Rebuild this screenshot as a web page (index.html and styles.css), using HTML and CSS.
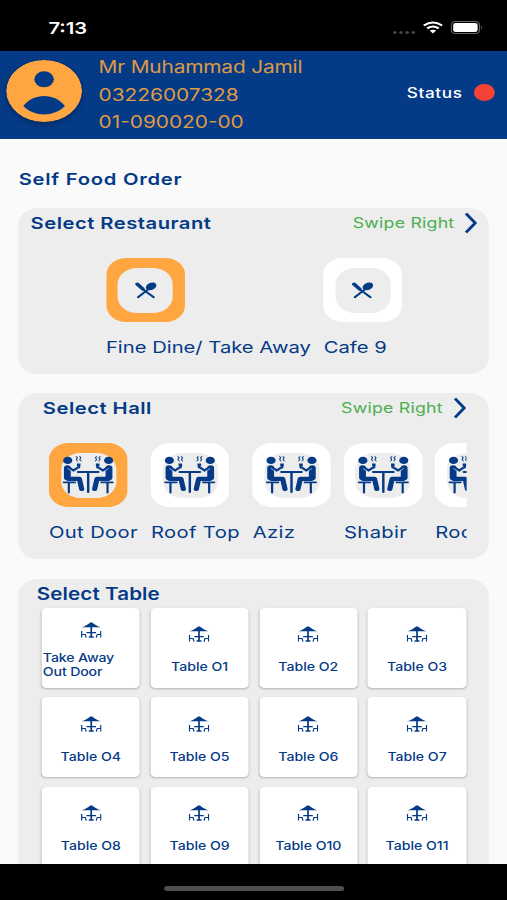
FILE: index.html
```html
<!DOCTYPE html>
<html lang="en">
<head>
  <meta charset="UTF-8" />
  <title>Self Food Order</title>
  <link rel="stylesheet" href="styles.css">
</head>
<body>

  <!-- Shared icons -->
  <svg class="icon-defs">
    <symbol id="utensils" viewBox="0 0 18 17">
      <path d="M2.7 15.2L11 7.4M15.500 15.2L7 7.600" fill="none" stroke="#043a86" stroke-width="1.9" stroke-linecap="round" />
      <path d="M2.1 2.2L6.6 7" fill="none" stroke="#043a86" stroke-width="3.2" stroke-linecap="round" />
      <ellipse cx="13.4" cy="4.4" rx="4.7" ry="3.4" transform="rotate(-35 13.4 4.4)" fill="#043a86" />
    </symbol>
    <symbol id="diners" viewBox="0 0 42 38">
      <g id="diner" fill="none" stroke="#043a86" stroke-linecap="round" stroke-linejoin="round">
        <circle cx="4.3" cy="4.4" r="3.7" fill="#043a86" stroke="none" />
        <path d="M4 12V21.5" stroke-width="5.6" />
        <path d="M4.5 22.8H13.8L15.7 33" stroke-width="4.2" />
        <path d="M5 11.3L9 14.7L13.5 11" stroke-width="2.3" />
        <path d="M4.6 12.7L9 16.2L13 12.8" stroke="#ededed" stroke-width=".6" />
        <path d="M11.8 8.8H14.7" stroke-width="2.6" stroke-linecap="butt" />
        <path d="M1 26.3H10.2M5.2 27V36.5" stroke-width="1.8" />
        <path d="M11.2 .6Q12.8 1.5 11.8 2.6T12.4 5M14 .6Q15.6 1.5 14.6 2.6T15.2 5" stroke-width=".9" />
      </g>
      <use href="#diner" transform="translate(42 0) scale(-1 1)" />
      <path d="M12.7 15.9H29.3M21 16V36" fill="none" stroke="#043a86" stroke-width="2" stroke-linecap="round" />
    </symbol>
    <symbol id="parasol" viewBox="0 0 17 16">
      <path d="M.7 5.2C3.4 4.2 5.8 2.600 7.700 .4H9.3C11.2 2.6 13.600 4.2 16.300 5.2Z" fill="#043a86" />
      <path d="M8.5 4V15M4.600 10.600H12.400M6.5 15H10.5" fill="none" stroke="#043a86" stroke-width="1.4" />
      <path d="M.7 9V15.6M.8 12.4H3.6L4.4 15.6M16.3 9V15.6M16.2 12.4H13.4L12.6 15.6" fill="none" stroke="#043a86" stroke-width="1" />
    </symbol>
    <symbol id="chevron" viewBox="0 0 12 22">
      <path d="M2.500 1.5L10 11L2.500 20.5" fill="none" stroke="#043a86" stroke-width="2.6" />
    </symbol>
  </svg>

  <div class="phone">
    <div class="status-bar">
      <span class="time">7:13</span>
      <div class="signal"><i></i><i></i><i></i><i></i></div>
      <svg class="wifi" viewBox="0 0 18 13">
        <path d="M1.1 4.3Q9 -1.7 16.9 4.3M4 7.4Q9 3.5 14 7.4" fill="none" stroke="#fff" stroke-width="2.1" />
        <path d="M6.2 9.8Q9 7.8 11.8 9.8L9 12.8Z" fill="#fff" />
      </svg>
      <svg class="battery" viewBox="0 0 27 13">
        <rect x=".5" y=".5" width="23" height="12" rx="3.3" fill="none" stroke="#666" />
        <rect x="2" y="2" width="20" height="9" rx="2" fill="#fff" />
        <path d="M25 4.5Q26.6 6.5 25 8.5Z" fill="#666" />
      </svg>
    </div>

    <header class="header">
      <svg class="avatar" viewBox="0 0 62 62">
        <circle cx="31" cy="31" r="31" fill="#ffa641" />
        <circle cx="31" cy="19.3" r="8" fill="#043a86" />
        <path d="M14 46C22 32.5 40 32.5 48 46C39 57.3 23 57.3 14 46Z" fill="#043a86" />
      </svg>
      <div class="user">
        <div class="user-name">Mr Muhammad Jamil</div>
        <div>03226007328</div>
        <div>01-090020-00</div>
      </div>
      <span class="status">Status</span>
      <span class="status-dot"></span>
    </header>

    <main class="content">
      <h1>Self Food Order</h1>

      <section class="card restaurants">
        <div class="card-head">
          <h2>Select Restaurant</h2>
          <span class="swipe">Swipe Right</span>
          <svg class="chevron"><use href="#chevron" /></svg>
        </div>
        <div class="options">
          <div class="option selected">
            <div class="tile"><svg class="utensils"><use href="#utensils" /></svg></div>
            <span>Fine Dine/ Take Away</span>
          </div>
          <div class="option">
            <div class="tile"><svg class="utensils"><use href="#utensils" /></svg></div>
            <span>Cafe 9</span>
          </div>
        </div>
      </section>

      <section class="card halls">
        <div class="card-head">
          <h2>Select Hall</h2>
          <span class="swipe">Swipe Right</span>
          <svg class="chevron"><use href="#chevron" /></svg>
        </div>
        <div class="options">
          <div class="option selected">
            <div class="tile"><svg class="diners"><use href="#diners" /></svg></div>
            <span>Out Door</span>
          </div>
          <div class="option">
            <div class="tile"><svg class="diners"><use href="#diners" /></svg></div>
            <span>Roof Top</span>
          </div>
          <div class="option">
            <div class="tile"><svg class="diners"><use href="#diners" /></svg></div>
            <span>Aziz</span>
          </div>
          <div class="option">
            <div class="tile"><svg class="diners"><use href="#diners" /></svg></div>
            <span>Shabir</span>
          </div>
          <div class="option">
            <div class="tile"><svg class="diners"><use href="#diners" /></svg></div>
            <span>Roo</span>
          </div>
        </div>
      </section>

      <section class="card tables">
        <h2>Select Table</h2>
        <div class="table-grid">
          <div class="table two-line"><svg><use href="#parasol" /></svg><span>Take Away<br>Out Door</span></div>
          <div class="table"><svg><use href="#parasol" /></svg><span>Table O1</span></div>
          <div class="table"><svg><use href="#parasol" /></svg><span>Table O2</span></div>
          <div class="table"><svg><use href="#parasol" /></svg><span>Table O3</span></div>
          <div class="table"><svg><use href="#parasol" /></svg><span>Table O4</span></div>
          <div class="table"><svg><use href="#parasol" /></svg><span>Table O5</span></div>
          <div class="table"><svg><use href="#parasol" /></svg><span>Table O6</span></div>
          <div class="table"><svg><use href="#parasol" /></svg><span>Table O7</span></div>
          <div class="table"><svg><use href="#parasol" /></svg><span>Table O8</span></div>
          <div class="table"><svg><use href="#parasol" /></svg><span>Table O9</span></div>
          <div class="table"><svg><use href="#parasol" /></svg><span>Table O10</span></div>
          <div class="table"><svg><use href="#parasol" /></svg><span>Table O11</span></div>
        </div>
      </section>
    </main>

    <footer class="home-bar"><div class="home-indicator"></div></footer>
  </div>

</body>
</html>
```
FILE: styles.css
```css
* {
  box-sizing: border-box;
}

html, body {
  margin: 0;
  height: 900px;
  overflow: hidden;
  background: #000;
}

.icon-defs {
  display: none;
}

/* 414px wide screen, widened to fill the 507px window */
.phone {
  display: flex;
  flex-direction: column;
  width: 414px;
  height: 900px;
  transform: scaleX(1.2247);
  transform-origin: 0 0;
  font-family: Inter, Roboto, sans-serif;
  color: #043a86;
}

.status-bar {
  display: flex;
  flex: none;
  align-items: center;
  height: 51px;
  padding: 4px 19px 0 39.5px;
  background: #000;
  color: #fff;
}

.time {
  flex: 1;
  font-size: 16.5px;
  font-weight: 600;
}

.signal {
  display: flex;
  gap: 2px;
  margin: 9px 6px 0 0;
}

.signal i {
  width: 3px;
  height: 3px;
  border-radius: 50%;
  background: #444;
}

.wifi {
  width: 17px;
  height: 13px;
  margin-right: 6px;
}

.battery {
  width: 27px;
  height: 13px;
}

.header {
  display: flex;
  flex: none;
  align-items: center;
  height: 88px;
  padding: 0 10.5px 0 5px;
  background: #043a86;
}

.avatar {
  width: 62px;
  height: 62px;
  margin-top: -8px;
  border-radius: 50%;
  box-shadow: 0 2px 4px rgba(0,0,0,0.3);
}

.user {
  flex: 1;
  margin: 1px 0 0 13.5px;
  font-size: 17px;
  line-height: 27.6px;
  color: #df9a45;
}

.user-name {
  letter-spacing: -0.12px;
}

.status {
  margin-top: -6px;
  margin-right: 9.3px;
  font-size: 14px;
  font-weight: 500;
  letter-spacing: 0.5px;
  color: #fff;
}

.status-dot {
  width: 16.5px;
  height: 16.5px;
  margin-top: -5px;
  border-radius: 50%;
  background: #f44336;
}

.content {
  flex: 1;
  min-height: 0;
  overflow: hidden;
  padding: 30px 15px 0;
  background: #fafafa;
}

h1, h2 {
  margin: 0;
  font-size: 16.5px;
  font-weight: 600;
  line-height: 20px;
  letter-spacing: 0.4px;
}

h1 {
  margin-bottom: 19px;
  padding-left: 0.3px;
  letter-spacing: 0.6px;
}

.card {
  height: 166px;
  margin-bottom: 19.3px;
  border-radius: 16px;
  background: #ededed;
}

.card-head {
  display: flex;
  align-items: center;
  height: 30px;
  padding: 0 9px 0 10px;
}

.card-head h2 {
  flex: 1;
}

.swipe {
  margin-right: 7px;
  padding-bottom: 1px;
  font-size: 14.5px;
  letter-spacing: 0.17px;
  color: #4caf50;
}

.chevron {
  width: 12px;
  height: 22px;
}

.options {
  display: flex;
  gap: 10.5px;
  padding: 20px 0 0 71.5px;
}

.option {
  flex: none;
  font-size: 16.5px;
  line-height: 20px;
  white-space: nowrap;
}

.tile {
  display: grid;
  place-items: center;
  width: 64px;
  height: 64px;
  margin-bottom: 15px;
  border-radius: 16px;
  background: #fff;
}

/* grey well behind the icon */
.tile::before {
  content: "";
  grid-area: 1 / 1;
  width: 45px;
  height: 45px;
  border-radius: 16px;
  background: #ededed;
}

.tile svg {
  grid-area: 1 / 1;
  z-index: 1;
}

.selected .tile {
  background: #ffa641;
}

.utensils {
  width: 18px;
  height: 17px;
}

.diners {
  width: 42px;
  height: 38px;
}

.halls .card-head {
  padding: 0 18.5px 0 20px;
}

.halls .options {
  width: 341px;
  margin-left: 25px;
  padding-left: 0;
  overflow: hidden;
}

.halls .option {
  letter-spacing: 0.3px;
}

.tables {
  height: 380px;
  padding-top: 5px;
}

.tables h2 {
  padding-left: 15px;
  font-size: 16.8px;
  letter-spacing: 0.1px;
}

.table-grid {
  display: grid;
  grid-template-columns: repeat(4, 80.4px);
  grid-auto-rows: 80.4px;
  gap: 9.1px 8.4px;
  margin: 4px 0 0 19px;
}

.table {
  display: flex;
  flex-direction: column;
  align-items: center;
  padding-top: 18.5px;
  border-radius: 4px;
  background: #fff;
  box-shadow: 0 1px 2px rgba(0,0,0,0.25);
  font-size: 11.5px;
  font-weight: 450;
  line-height: 14px;
}

.table svg {
  width: 17px;
  height: 16px;
  margin-bottom: 18px;
}

.table.two-line {
  padding-top: 14px;
}

.two-line svg {
  margin-bottom: 13.5px;
}

.two-line span {
  align-self: flex-start;
  padding-left: 1px;
  letter-spacing: -0.1px;
}

.home-bar {
  flex: none;
  height: 36px;
  padding-top: 22px;
  background: #000;
}

.home-indicator {
  width: 147px;
  height: 5px;
  margin: 0 auto;
  border-radius: 3px;
  background: #4e4e4e;
}
```
